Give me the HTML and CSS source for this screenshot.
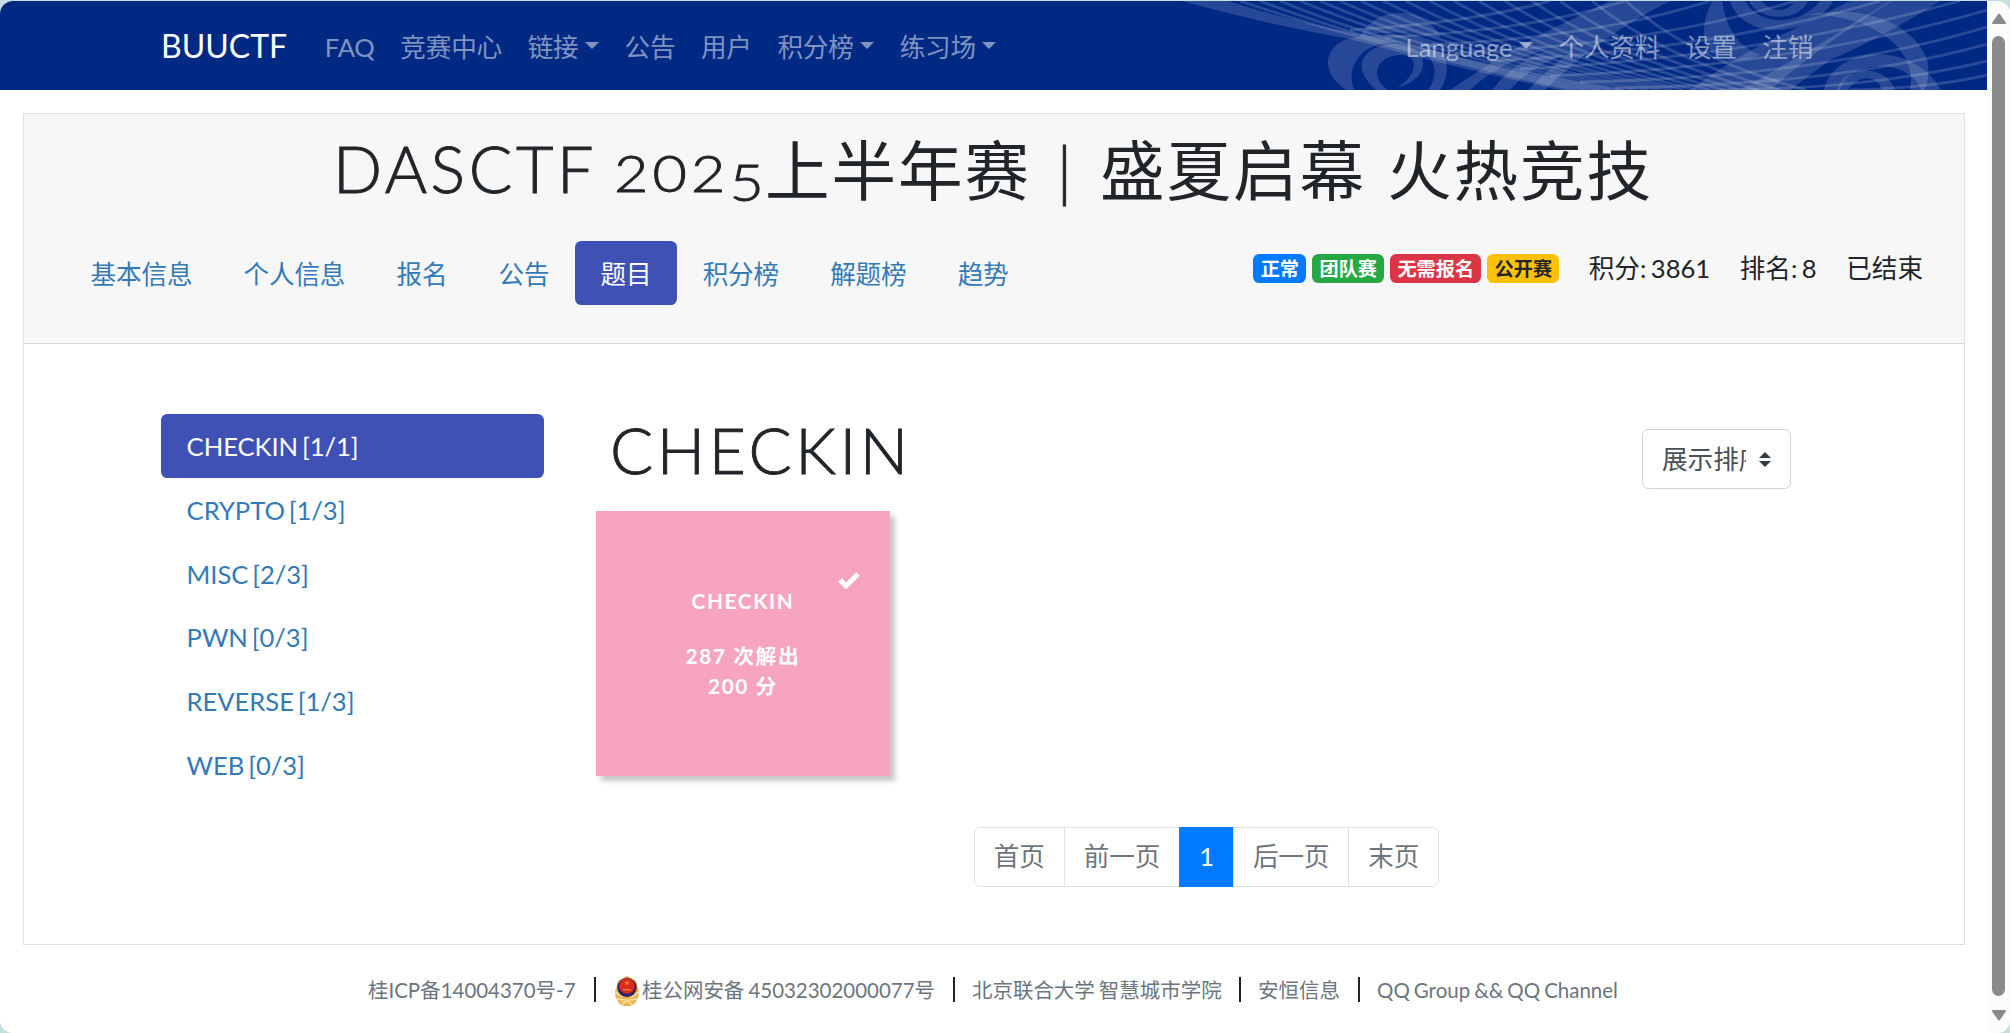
FILE: index.html
```
<!DOCTYPE html>
<html lang="zh-CN">
<head>
<meta charset="utf-8">
<title>BUUCTF</title>
<link rel="stylesheet" href="styles.css">
</head>
<body>
<div class="window">
<div class="page">
  <header class="navbar">
    <svg class="navbar-art" viewBox="1170 0 817 89" width="817" height="89" aria-hidden="true">
      <g fill="#fff" fill-opacity=".15">
        <path d="M1182 0Q1270 24 1350 38Q1450 66 1560 89H1625Q1480 64 1390 38Q1310 26 1228 0Z"/>
        <path d="M1359 36C1370 18 1385 12 1400 12C1418 12 1434 22 1441 37C1415 30 1385 30 1359 36Z"/>
        <path d="M1346 89C1316 68 1326 38 1359 36C1405 28 1447 40 1447 68Q1446 81 1440 89H1428Q1438 75 1433 63C1425 35 1370 34 1356 60Q1348 73 1354 89Z"/>
        <path d="M1376 89C1347 63 1368 44 1392 43C1428 42 1437 75 1397 87C1420 72 1418 53 1400 54C1375 55 1370 76 1388 89Z"/>
        <path d="M1450 89Q1510 48 1560 24L1610 0H1670Q1600 35 1545 89H1528Q1548 68 1568 53Q1530 65 1510 89H1492Q1512 62 1550 48Q1500 60 1470 89Z"/>
        <path d="M1712 0C1700 25 1700 49 1722 58Q1743 62 1760 54Q1728 42 1722 0Z"/>
        <path d="M1730 0C1740 30 1778 35 1805 23Q1826 14 1833 0H1820C1800 25 1760 26 1745 0Z"/>
        <path d="M1749 0C1760 22 1800 20 1808 0H1795C1788 12 1770 12 1762 0Z"/>
        <path d="M1690 89Q1740 52 1790 30L1850 0H1892Q1820 45 1770 89Z"/>
        <path d="M1740 89Q1810 50 1860 18L1890 0H1940Q1880 38 1830 59L1790 89Z"/>
        <path d="M1808 14C1880 0 1922 35 1928 62Q1930 80 1924 89H1910C1920 45 1865 12 1808 14Z"/>
        <path d="M1824 89C1834 45 1912 38 1941 89H1921C1910 57 1848 58 1840 89Z"/>
        <path d="M1837 89C1845 63 1887 63 1895 89H1882C1876 73 1858 74 1848 89Z"/>
      </g>
      <g class="navbar-mesh">
        <path d="M1240 0Q1370 44 1575 89M1260 0Q1385 48 1588 89M1280 0Q1400 50 1600 89M1300 0Q1420 50 1612 89M1320 0Q1440 52 1624 89M1340 0Q1455 52 1636 89M1361 0Q1470 52 1648 89M1383 0Q1490 52 1660 89M1406 0Q1510 54 1672 89M1430 0Q1528 54 1684 89M1454 0Q1548 54 1697 89M1479 0Q1568 54 1710 89M1505 0Q1590 54 1724 89M1532 0Q1612 54 1740 89M1560 0Q1635 54 1758 89M1592 0Q1660 56 1780 89M1626 0Q1690 58 1806 89"/>
        <path d="M1350 29Q1470 22 1550 0M1385 36Q1530 30 1625 0M1420 44Q1590 38 1710 0M1455 52Q1650 44 1795 0M1490 60Q1710 50 1880 0M1520 68Q1760 56 1960 0M1550 75Q1790 66 1987 9M1580 81Q1820 76 1987 26M1615 87Q1840 84 1987 43M1720 89Q1870 88 1987 60M1850 89Q1930 87 1987 74"/>
      </g>
    </svg>
    <nav class="navbar-inner">
      <a class="brand">BUUCTF</a>
      <a class="nav-link">FAQ</a>
      <a class="nav-link">竞赛中心</a>
      <a class="nav-link caret">链接</a>
      <a class="nav-link">公告</a>
      <a class="nav-link">用户</a>
      <a class="nav-link caret">积分榜</a>
      <a class="nav-link caret">练习场</a>
      <a class="nav-link caret push">Language</a>
      <a class="nav-link">个人资料</a>
      <a class="nav-link">设置</a>
      <a class="nav-link">注销</a>
    </nav>
  </header>

  <main class="card">
    <div class="card-header">
      <h1 class="title"><span class="title-latin">DASCTF</span> <span class="title-num">202<span class="low">5</span></span>上半年赛<span class="bar">|</span>盛夏启幕<span class="gap"></span>火热竞技</h1>
      <div class="header-row">
        <nav class="tabs">
          <a>基本信息</a><a>个人信息</a><a>报名</a><a>公告</a><a class="active">题目</a><a>积分榜</a><a>解题榜</a><a>趋势</a>
        </nav>
        <div class="status">
          <span class="badge blue">正常</span><span class="badge green">团队赛</span><span class="badge red">无需报名</span><span class="badge yellow">公开赛</span>
          <span class="info">积分: 3861</span><span class="info">排名: 8</span><span class="info">已结束</span>
        </div>
      </div>
    </div>
    <div class="card-body">
      <nav class="categories">
        <a class="active">CHECKIN [1/1]</a>
        <a>CRYPTO [1/3]</a>
        <a>MISC [2/3]</a>
        <a>PWN [0/3]</a>
        <a>REVERSE [1/3]</a>
        <a>WEB [0/3]</a>
      </nav>
      <section class="board">
        <div class="board-head">
          <h2>CHECKIN</h2>
          <div class="select">
            <span class="select-text">展示排序</span>
            <svg viewBox="0 0 4 5" width="12" height="15"><path fill="#343a40" d="M2 0L0 2h4zM2 5L0 3h4z"/></svg>
          </div>
        </div>
        <div class="challenge">
          <svg class="check" viewBox="0 0 22 17" width="22" height="17"><path d="M2 8L8 14L20 2" fill="none" stroke="#fff" stroke-width="5"/></svg>
          <p class="name">CHECKIN</p>
          <p>287 次解出</p>
          <p>200 分</p>
        </div>
        <div class="pagination">
          <a>首页</a><a>前一页</a><a class="active">1</a><a>后一页</a><a>末页</a>
        </div>
      </section>
    </div>
  </main>

  <footer class="footer">
    <a class="f1">桂ICP备14004370号-7</a><i></i>
    <a class="f2"><svg viewBox="0 0 28 31" width="28" height="31">
      <path d="M4 10Q0 17 4 24Q7 31 14 30Q21 31 24 24Q28 17 24 10L20 20H8Z" fill="#e8b85a"/>
      <path d="M2 16l8 5M4 23l8 1M26 16l-8 5M24 23l-8 1M9 29l5-5l5 5" stroke="#f9e2a0" stroke-width="1.5" fill="none"/>
      <path d="M14 0Q18 2 23 5Q28 18 14 22Q0 18 5 5Q10 2 14 0Z" fill="#d9a050"/>
      <circle cx="14" cy="11.5" r="9.6" fill="#28246b"/>
      <circle cx="14" cy="10" r="7.8" fill="#dc2a1a"/>
      <path d="M14 4l1 2h2l-1.6 1.3l.6 2l-2-1.2l-2 1.2l.6-2L11 6h2z" fill="#f07a2c"/>
      <path d="M10 13h8v1.5h-8z" fill="#f07a2c"/>
    </svg>桂公网安备 45032302000077号</a><i></i>
    <a class="f3">北京联合大学 智慧城市学院</a><i></i>
    <a class="f4">安恒信息</a><i></i>
    <a class="f5">QQ Group &amp;&amp; QQ Channel</a>
  </footer>
</div>
<div class="scrollbar">
  <svg viewBox="0 0 16 12" width="16" height="12"><path d="M8 1.5L14 10H2Z" fill="#8a8a8a" stroke="#8a8a8a" stroke-width="2" stroke-linejoin="round"/></svg>
  <div class="thumb"></div>
  <svg viewBox="0 0 16 12" width="16" height="12"><path d="M8 10.5L14 2H2Z" fill="#8a8a8a" stroke="#8a8a8a" stroke-width="2" stroke-linejoin="round"/></svg>
</div>
</div>
</body>
</html>
```
FILE: styles.css
```
* { box-sizing: border-box; }
body {
  margin: 0;
  background: #c5dfe0;
  font: 25.6px/1.5 Lato, "Noto Sans CJK SC", sans-serif;
  color: #212529;
  overflow: hidden;
}
h1, h2, p { margin: 0; }
h1, h2 { font-weight: 400; }
a { white-space: nowrap; }
.window {
  display: flex;
  height: 1032px;
  margin-top: 1px;
  border-radius: 13px;
  overflow: hidden;
  background: #fff;
}
.page { width: 1987px; }

.navbar { position: relative; height: 89px; background: #002984; }
.navbar-art { position: absolute; top: 0; right: 0; }
.navbar-mesh { fill: none; stroke: #fff; stroke-opacity: .16; stroke-width: 2.8; }
.navbar-inner {
  position: relative;
  display: flex;
  align-items: center;
  height: 89px;
  padding: 0 161px 0 161px;
}
.brand { width: 151px; color: #fff; font-size: 32px; }
.nav-link { padding: 3px 12.8px 0; color: rgba(255,255,255,.5); letter-spacing: -.15px; }
.caret { display: flex; align-items: center; gap: 6.3px; }
.caret::after {
  content: "";
  margin-top: -2px;
  border: 7.2px solid transparent;
  border-top-color: currentColor;
  border-bottom: 0;
}
.push { margin-left: auto; letter-spacing: 0; }

.card {
  margin: 23px 22px 0 23px;
  height: 832px;
  border: 1px solid #dfdfdf;
}
.card-header { height: 230px; background: #f7f7f7; border-bottom: 1px solid #d8d8d8; }
.title {
  height: 127px;
  padding: 8px 0 0 309px;
  font-size: 64.6px;
  line-height: 96px;
  letter-spacing: 1.9px;
  white-space: nowrap;
  display: flex;
}
.title-latin { width: 281px; margin-top: -2px; font-weight: 300; letter-spacing: 3.6px; -webkit-text-stroke: .9px; }
.title-num {
  width: 151px;
  margin-top: -2px;
  padding-top: 4px;
  font-weight: 300;
  font-size: 52px;
  letter-spacing: 3.6px;
  -webkit-text-stroke: .9px;
  transform: scaleX(1.14);
  transform-origin: 0 0;
}
.low { position: relative; top: 9px; }
.bar { width: 69px; text-align: center; font-weight: 300; -webkit-text-stroke: .9px; }
.gap { width: 21px; }
.header-row { display: flex; justify-content: space-between; align-items: flex-start; padding: 0 41px 0 41px; }
.tabs { display: flex; letter-spacing: -.16px; }
.tabs a { height: 64px; padding: 0 25.6px; line-height: 66px; color: #337ab7; }
.tabs .active { background: #3f51b5; color: #fff; border-radius: 6.4px; }
.status { display: flex; align-items: center; height: 54px; word-spacing: -2px; }
.badge {
  height: 29px;
  margin-right: 5.8px;
  padding: 0 7.3px;
  border-radius: 6.4px;
  font-size: 19.2px;
  line-height: 30px;
  font-weight: 700;
  color: #fff;
}
.blue { background: #007bff; }
.green { background: #28a745; }
.red { background: #dc3545; }
.yellow { background: #ffc107; color: #212529; }
.info { margin-left: 23.5px; margin-right: 6px; white-space: nowrap; }
.info:last-child { margin-right: 0; }

.card-body { display: flex; padding: 70px 0 0 137px; }
.categories { flex: none; width: 383px; margin-right: 52px; word-spacing: -2.6px; letter-spacing: -.05px; }
.categories a { display: block; height: 63.8px; padding-left: 25.6px; line-height: 65px; color: #337ab7; }
.categories .active { color: #fff; background: #3f51b5; border-radius: 6.4px; }
.board { flex: none; width: 1222px; }
.board-head { display: flex; justify-content: space-between; height: 97px; padding: 0 27px 0 14px; }
.board-head h2 { margin-top: -3px; font-size: 64px; line-height: 77px; font-weight: 300; letter-spacing: 3.6px; -webkit-text-stroke: .9px; }
.select {
  display: flex;
  align-items: center;
  justify-content: space-between;
  width: 149px;
  height: 60px;
  margin-top: 15px;
  padding: 0 19px 0 19px;
  border: 1px solid #ced4da;
  border-radius: 6.4px;
  color: #495057;
}
.select-text { width: 84px; padding-top: 1px; overflow: hidden; white-space: nowrap; }
.challenge {
  position: relative;
  width: 294px;
  height: 265px;
  padding-top: 75px;
  background: #f7a4c0;
  box-shadow: 5px 5px 5px rgba(0,0,0,.22);
  color: #fff;
  font-size: 20.8px;
  line-height: 30.5px;
  font-weight: 700;
  letter-spacing: 1.6px;
  text-align: center;
}
.challenge .name { margin-bottom: 24px; }
.check { position: absolute; top: 61px; right: 30px; }
.pagination { display: flex; justify-content: center; height: 60px; margin-top: 51px; letter-spacing: -.1px; }
.pagination a {
  padding: 0 19px;
  border: 1px solid #dee2e6;
  margin-left: -1px;
  line-height: 57px;
  color: #6c757d;
}
.pagination a:first-child { border-radius: 6.4px 0 0 6.4px; }
.pagination a:last-child { border-radius: 0 6.4px 6.4px 0; }
.pagination .active { color: #fff; background: #007bff; border-color: #007bff; }

.footer {
  display: flex;
  align-items: center;
  height: 88px;
  padding: 3px 0 0 368px;
  font-size: 20.48px;
  color: #6c757d;
  word-spacing: -1.2px;
}
.footer i { width: 2px; height: 25px; margin-top: -2px; background: #2c1c26; }
.f1 { width: 226px; }
.f2 { width: 340px; display: flex; align-items: center; margin-left: 17px; }
.f2 svg { margin: 2px 1px 0 0; }
.f3 { width: 268px; margin-left: 17px; }
.f4 { width: 101px; margin-left: 17px; }
.f3, .f4 { margin-right: -1px; }
.f5 { margin-left: 17px; }

.scrollbar {
  display: flex;
  flex-direction: column;
  align-items: center;
  width: 23px;
  padding: 12px 0 0;
  background: #fcfcfc;
}
.thumb { width: 13px; height: 960px; margin: 11px 0 13px; border-radius: 6.5px; background: #8a8a8a; }
.scrollbar svg { flex: none; }
```
